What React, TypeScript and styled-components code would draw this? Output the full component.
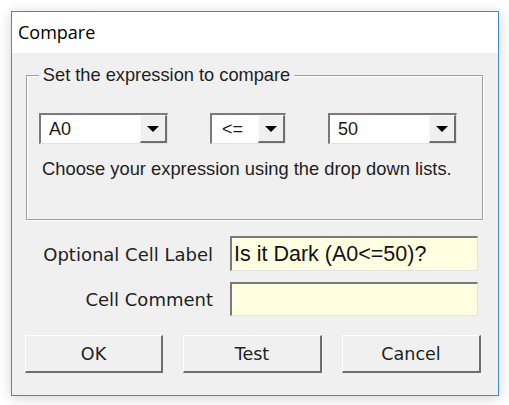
import React from "react";
import styled, { createGlobalStyle } from "styled-components";

const GlobalStyle = createGlobalStyle`
  html, body {
    margin: 0;
    padding: 0;
    background: #ffffff;
  }
  * { box-sizing: border-box; }
`;

const Page = styled.div`
  width: 509px;
  height: 405px;
  padding: 11px 0 0 11px;
`;

const Window = styled.div`
  width: 488px;
  height: 385px;
  border: 1px solid #3c8ad8;
  background: #f0f0f0;
  box-shadow: 0 2px 12px rgba(0, 0, 0, 0.18);
  display: flex;
  flex-direction: column;
`;

const TitleBar = styled.div`
  height: 41px;
  background: #ffffff;
  display: flex;
  align-items: center;
  padding: 0 0 1px 6px;
  font-family: "Open Sans", "Noto Sans", sans-serif;
  font-size: 18px;
  color: #000;
`;

const Body = styled.div`
  flex: 1;
  display: flex;
  flex-direction: column;
  padding: 22px 0 0 14px;
`;

const Group = styled.fieldset`
  margin: 0;
  width: 457px;
  height: 145px;
  border: 1px solid #a0a0a0;
  box-shadow: inset 1px 1px 0 #ffffff, 1px 1px 0 #ffffff;
  padding: 37px 0 0 12px;
  position: relative;
`;

const Legend = styled.div`
  position: absolute;
  top: -12px;
  left: 12px;
  padding: 0 4px;
  background: #f0f0f0;
  font-family: "Liberation Sans", Arial, sans-serif;
  font-size: 19px;
  line-height: 22px;
  color: #1e1e1e;
  transform: scaleX(0.96);
  transform-origin: left;
`;

const ComboRow = styled.div`
  display: flex;
`;

const Combo = styled.div<{ $w: number; $mr: number }>`
  width: ${(p) => p.$w}px;
  height: 31px;
  margin-right: ${(p) => p.$mr}px;
  background: #ffffff;
  border-top: 2px solid #7a7a7a;
  border-left: 2px solid #7a7a7a;
  border-bottom: 1px solid #e3e3e3;
  border-right: 1px solid #e3e3e3;
  display: flex;
  align-items: stretch;
`;

const ComboValue = styled.div<{ $pl?: number }>`
  flex: 1;
  display: flex;
  align-items: center;
  padding-left: ${(p) => p.$pl ?? 8}px;
  font-family: "Liberation Sans", Arial, sans-serif;
  font-size: 18px;
  color: #1a1a1a;
`;

const ArrowButton = styled.div`
  width: 27px;
  background: #f0f0f0;
  border-top: 1px solid #f8f8f8;
  border-left: 1px solid #f8f8f8;
  border-right: 2px solid #6e6e6e;
  border-bottom: 2px solid #6e6e6e;
  display: flex;
  align-items: center;
  justify-content: center;
`;

const Triangle = styled.div`
  width: 0;
  height: 0;
  border-left: 6px solid transparent;
  border-right: 6px solid transparent;
  border-top: 6px solid #000;
  margin-top: 1px;
`;

const HelpText = styled.div`
  margin: 14px 0 0 3px;
  font-family: "Liberation Sans", Arial, sans-serif;
  font-size: 19px;
  line-height: 22px;
  color: #1e1e1e;
  transform: scaleX(0.965);
  transform-origin: left;
  white-space: nowrap;
`;

const Form = styled.div`
  display: grid;
  grid-template-columns: 187px 248px;
  column-gap: 17px;
  row-gap: 11px;
  align-items: center;
  margin: 16px 0 0 0;
`;

const Label = styled.div`
  text-align: right;
  font-family: "DejaVu Sans", Verdana, sans-serif;
  font-size: 18px;
  color: #222;
  padding-top: 1px;
  white-space: nowrap;
`;

const TextBox = styled.div<{ $h: number }>`
  height: ${(p) => p.$h}px;
  background: #ffffe1;
  border-top: 2px solid #7a7a7a;
  border-left: 2px solid #7a7a7a;
  border-bottom: 1px solid #e3e3e3;
  border-right: 1px solid #e3e3e3;
  display: flex;
  align-items: center;
  padding-left: 2px;
  font-family: "Liberation Sans", Arial, sans-serif;
  font-size: 21.5px;
  color: #111;
`;

const ButtonRow = styled.div`
  display: flex;
  gap: 20px;
  margin: 19px 0 0 -1px;
`;

const Button = styled.button<{ $w: number }>`
  width: ${(p) => p.$w}px;
  height: 38px;
  margin: 0;
  padding: 0;
  background: #f0f0f0;
  border-top: 1px solid #ffffff;
  border-left: 1px solid #ffffff;
  border-right: 2px solid #6e6e6e;
  border-bottom: 2px solid #6e6e6e;
  border-radius: 0;
  font-family: "DejaVu Sans", Verdana, sans-serif;
  font-size: 17.5px;
  color: #222;
`;

export default function App() {
  return (
    <>
      <GlobalStyle />
      <Page>
        <Window>
          <TitleBar>Compare</TitleBar>
          <Body>
            <Group>
              <Legend>Set the expression to compare</Legend>
              <ComboRow>
                <Combo $w={129} $mr={42}>
                  <ComboValue>A0</ComboValue>
                  <ArrowButton>
                    <Triangle />
                  </ArrowButton>
                </Combo>
                <Combo $w={76} $mr={42}>
                  <ComboValue $pl={10}>&lt;=</ComboValue>
                  <ArrowButton>
                    <Triangle />
                  </ArrowButton>
                </Combo>
                <Combo $w={129} $mr={0}>
                  <ComboValue>50</ComboValue>
                  <ArrowButton>
                    <Triangle />
                  </ArrowButton>
                </Combo>
              </ComboRow>
              <HelpText>Choose your expression using the drop down lists.</HelpText>
            </Group>
            <Form>
              <Label>Optional Cell Label</Label>
              <TextBox $h={35}>Is it Dark (A0&lt;=50)?</TextBox>
              <Label>Cell Comment</Label>
              <TextBox $h={34} />
            </Form>
            <ButtonRow>
              <Button $w={138}>OK</Button>
              <Button $w={139}>Test</Button>
              <Button $w={139}>Cancel</Button>
            </ButtonRow>
          </Body>
        </Window>
      </Page>
    </>
  );
}
